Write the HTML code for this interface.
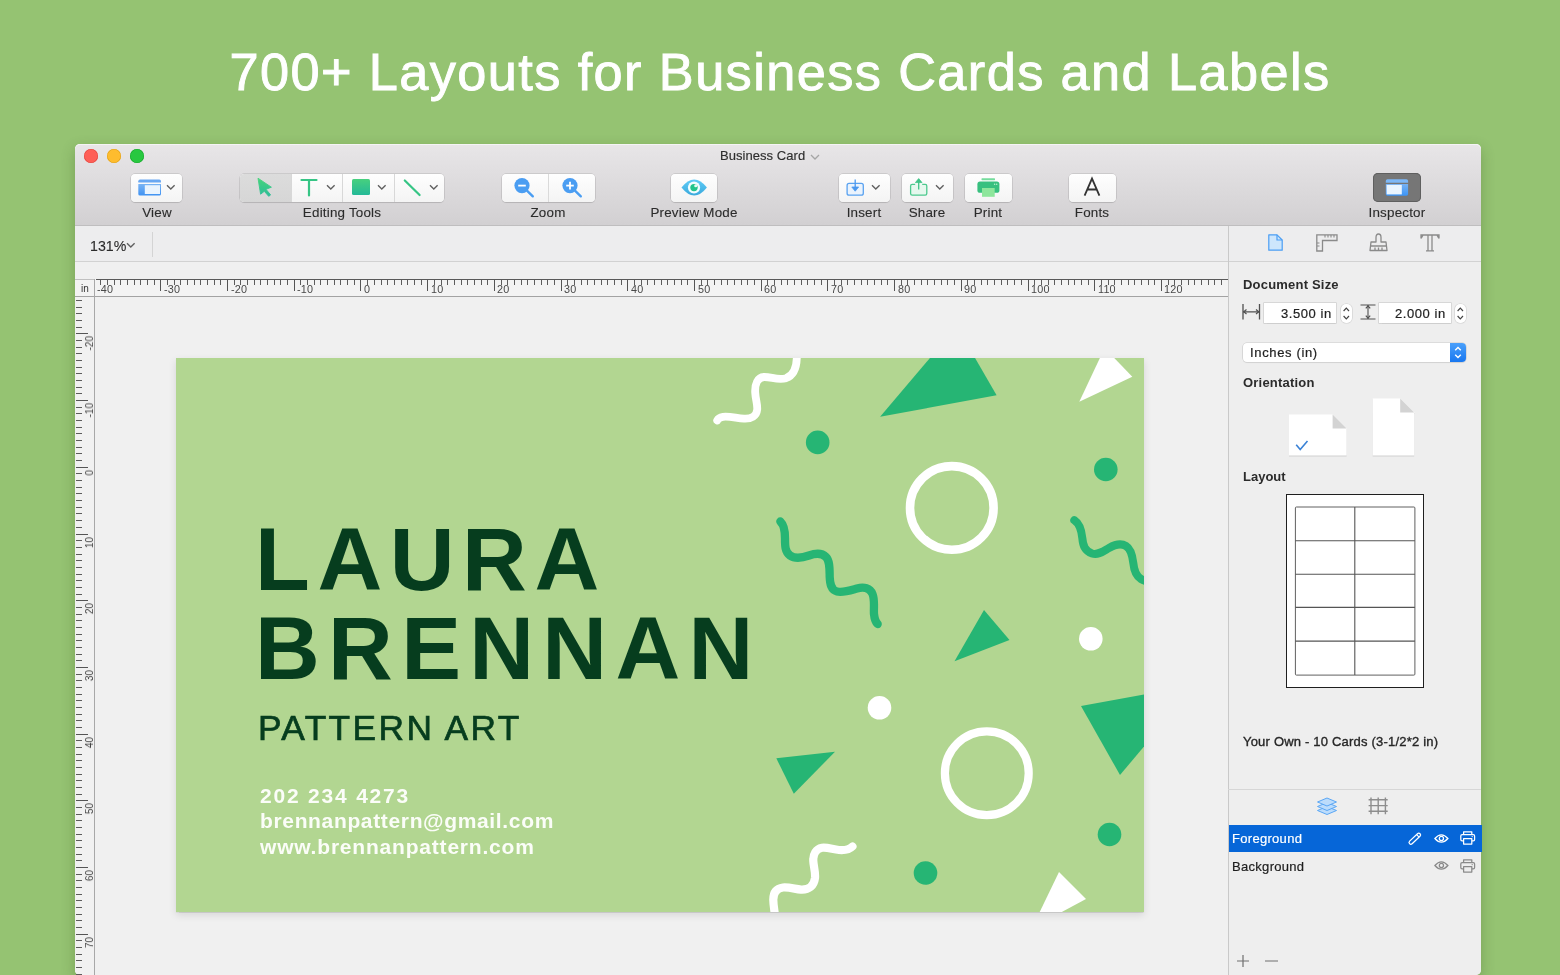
<!DOCTYPE html>
<html><head><meta charset="utf-8"><style>
*{margin:0;padding:0;box-sizing:border-box}
html,body{width:1560px;height:975px;overflow:hidden}
body{background:#95c372;font-family:"Liberation Sans",sans-serif;position:relative;color:#2b2b2b}
.a{position:absolute;white-space:nowrap;will-change:transform}
svg{position:absolute;overflow:visible}
</style></head><body>
<div class="a" style="left:0.0px;width:1560px;text-align:center;top:46.0px;font-size:52.3px;line-height:52.3px;color:#fff;letter-spacing:1.4px;-webkit-text-stroke:.9px #fff">700+ Layouts for Business Cards and Labels</div>
<div class="a" style="left:75px;top:144px;width:1406px;height:831px;border-radius:5px;background:#efefef;box-shadow:0 5px 14px 0 rgba(50,80,30,.3)"></div>
<div class="a" style="left:75px;top:144px;width:1406px;height:82px;border-radius:5px 5px 0 0;background:linear-gradient(#e8e6e8,#d2d0d2);border-bottom:1px solid #bfbebf;box-shadow:inset 0 1px 0 rgba(255,255,255,.55)"></div>
<div class="a" style="left:84.3px;top:149.2px;width:14px;height:14px;border-radius:50%;background:#fe5f57;box-shadow:inset 0 0 0 .6px #e2463f"></div>
<div class="a" style="left:107.1px;top:149.2px;width:14px;height:14px;border-radius:50%;background:#febc2e;box-shadow:inset 0 0 0 .6px #e1a116"></div>
<div class="a" style="left:129.9px;top:149.2px;width:14px;height:14px;border-radius:50%;background:#28c840;box-shadow:inset 0 0 0 .6px #17a82b"></div>
<div class="a" style="left:720.2px;top:149.2px;font-size:13px;line-height:13px;color:#2e2e2e;letter-spacing:.05px;-webkit-text-stroke:.15px #2e2e2e">Business Card</div>
<svg style="left:810px;top:154px" width="10" height="6"><path d="M1 1 L5 5 L9 1" fill="none" stroke="#a5a5a5" stroke-width="1.3"/></svg>
<div class="a" style="left:131px;top:173.5px;width:51px;height:28.0px;border-radius:4px;background:linear-gradient(#fefefe,#f4f4f4);box-shadow:0 0 0 .5px rgba(0,0,0,.18),0 1px 1px rgba(0,0,0,.08)"></div>
<svg style="left:137px;top:178px" width="26" height="20" viewBox="137 178 26 20"><defs><linearGradient id="vg" x1="0" y1="0" x2="0" y2="1"><stop offset="0" stop-color="#7ab4f4"/><stop offset="1" stop-color="#3f92f2"/></linearGradient></defs><path d="M138.3 182.6 V181.3 Q138.3 179.6 140 179.6 H159.3 Q161 179.6 161 181.3 V182.6 Z" fill="#6aa8f2"/><path d="M138.3 184 H161 V193.9 Q161 195.6 159.3 195.6 H140 Q138.3 195.6 138.3 193.9 Z" fill="url(#vg)"/><rect x="144.8" y="185.2" width="15.2" height="8.8" fill="#eaf4fe"/></svg>
<svg style="left:166.2px;top:183.8px" width="10" height="7"><path d="M1 1.2 L4.8 5 L8.6 1.2" fill="none" stroke="#606060" stroke-width="1.35"/></svg>
<div class="a" style="left:56.5px;width:200px;text-align:center;top:206.3px;font-size:13.4px;line-height:13.4px;letter-spacing:.2px;-webkit-text-stroke:.12px #333">View</div>
<div class="a" style="left:239.5px;top:173.5px;width:203.5px;height:28.0px;border-radius:4px;background:linear-gradient(#fefefe,#f4f4f4);box-shadow:0 0 0 .5px rgba(0,0,0,.18),0 1px 1px rgba(0,0,0,.08)"></div>
<div class="a" style="left:239.5px;top:173.5px;width:51px;height:28px;border-radius:4px 0 0 4px;background:linear-gradient(#dcdcdc,#d6d6d6)"></div>
<div class="a" style="left:290.5px;top:173.5px;width:1px;height:28px;background:#d8d8d8"></div>
<div class="a" style="left:341.5px;top:173.5px;width:1px;height:28px;background:#d8d8d8"></div>
<div class="a" style="left:393.5px;top:173.5px;width:1px;height:28px;background:#d8d8d8"></div>
<svg style="left:255px;top:175px" width="20" height="24" viewBox="255 175 20 24"><defs><linearGradient id="ag" x1="0" y1="0" x2="0" y2="1"><stop offset="0" stop-color="#48d47c"/><stop offset="1" stop-color="#2cbc98"/></linearGradient></defs><path d="M258 178.2 L271.4 187.2 L266 189.3 L270.6 194.9 L268.7 196.3 L264.3 191.3 L260.6 194.2 Z" fill="url(#ag)" stroke="url(#ag)" stroke-width=".9" stroke-linejoin="round"/></svg>
<svg style="left:300px;top:178px" width="18" height="19" viewBox="0 0 18 19"><path d="M1.5 2 H16.5 M9 2 V17.5" fill="none" stroke="#36c585" stroke-width="2.2" stroke-linecap="round"/></svg>
<svg style="left:325.5px;top:184px" width="10" height="7"><path d="M1 1.2 L4.8 5 L8.6 1.2" fill="none" stroke="#606060" stroke-width="1.35"/></svg>
<div class="a" style="left:351.6px;top:179.1px;width:18.4px;height:16.2px;border-radius:1.5px;background:linear-gradient(#47d07e,#24b998)"></div>
<svg style="left:377px;top:184px" width="10" height="7"><path d="M1 1.2 L4.8 5 L8.6 1.2" fill="none" stroke="#606060" stroke-width="1.35"/></svg>
<svg style="left:402px;top:178px" width="20" height="20" viewBox="0 0 20 20"><path d="M2.8 2.5 L17.6 17" fill="none" stroke="#36c585" stroke-width="2.2" stroke-linecap="round"/></svg>
<svg style="left:429px;top:184px" width="10" height="7"><path d="M1 1.2 L4.8 5 L8.6 1.2" fill="none" stroke="#606060" stroke-width="1.35"/></svg>
<div class="a" style="left:242.0px;width:200px;text-align:center;top:206.3px;font-size:13.4px;line-height:13.4px;letter-spacing:.2px;-webkit-text-stroke:.12px #333">Editing Tools</div>
<div class="a" style="left:502px;top:173.5px;width:92.5px;height:28.0px;border-radius:4px;background:linear-gradient(#fefefe,#f4f4f4);box-shadow:0 0 0 .5px rgba(0,0,0,.18),0 1px 1px rgba(0,0,0,.08)"></div>
<div class="a" style="left:548px;top:173.5px;width:1px;height:28px;background:#dadada"></div>
<svg style="left:513px;top:177px" width="24" height="24" viewBox="0 0 24 24"><circle cx="9" cy="8.6" r="7.6" fill="#4a9df2"/><path d="M14.2 13.8 L19.8 19.3" stroke="#4a9df2" stroke-width="2.4" stroke-linecap="round"/><path d="M5.2 8.6 H12.8" stroke="#fff" stroke-width="1.8"/></svg>
<svg style="left:561.4px;top:177px" width="24" height="24" viewBox="0 0 24 24"><circle cx="9" cy="8.6" r="7.6" fill="#4a9df2"/><path d="M14.2 13.8 L19.8 19.3" stroke="#4a9df2" stroke-width="2.4" stroke-linecap="round"/><path d="M5.2 8.6 H12.8" stroke="#fff" stroke-width="1.8"/><path d="M9 4.8 V12.4" stroke="#fff" stroke-width="1.8"/></svg>
<div class="a" style="left:448.0px;width:200px;text-align:center;top:206.3px;font-size:13.4px;line-height:13.4px;letter-spacing:.2px;-webkit-text-stroke:.12px #333">Zoom</div>
<div class="a" style="left:671px;top:173.5px;width:46px;height:28.0px;border-radius:4px;background:linear-gradient(#fefefe,#f4f4f4);box-shadow:0 0 0 .5px rgba(0,0,0,.18),0 1px 1px rgba(0,0,0,.08)"></div>
<svg style="left:680px;top:178px" width="28" height="20" viewBox="680 178 28 20"><defs><linearGradient id="eg" x1="0" y1="0" x2="0" y2="1"><stop offset="0" stop-color="#5fcbf7"/><stop offset="1" stop-color="#3aa9dc"/></linearGradient></defs><path d="M681.5 187.6 Q694.2 171.6 706.9 187.6 Q694.2 203.6 681.5 187.6 Z" fill="url(#eg)"/><circle cx="694" cy="187.5" r="6.1" fill="#f2fdff"/><circle cx="694" cy="187.6" r="3.7" fill="#22c48c"/><circle cx="695.7" cy="185.8" r="1.5" fill="#e9fbf3"/></svg>
<div class="a" style="left:594.0px;width:200px;text-align:center;top:206.3px;font-size:13.4px;line-height:13.4px;letter-spacing:.2px;-webkit-text-stroke:.12px #333">Preview Mode</div>
<div class="a" style="left:838.5px;top:173.5px;width:50.5px;height:28.0px;border-radius:4px;background:linear-gradient(#fefefe,#f4f4f4);box-shadow:0 0 0 .5px rgba(0,0,0,.18),0 1px 1px rgba(0,0,0,.08)"></div>
<svg style="left:844px;top:177px" width="22" height="21" viewBox="844 177 22 21"><rect x="847.1" y="183.4" width="16.2" height="11.8" rx="2" fill="#eaf3fd" stroke="#5aa2f0" stroke-width="1.3"/><path d="M855.2 179.5 V189.5" stroke="#4a98ef" stroke-width="1.3"/><path d="M851.8 187 L855.2 191.2 L858.6 187 Z" fill="#4a98ef" stroke="#4a98ef" stroke-width=".8" stroke-linejoin="round"/></svg>
<svg style="left:871px;top:184px" width="10" height="7"><path d="M1 1.2 L4.8 5 L8.6 1.2" fill="none" stroke="#606060" stroke-width="1.35"/></svg>
<div class="a" style="left:763.8px;width:200px;text-align:center;top:206.3px;font-size:13.4px;line-height:13.4px;letter-spacing:.2px;-webkit-text-stroke:.12px #333">Insert</div>
<div class="a" style="left:902px;top:173.5px;width:50.5px;height:28.0px;border-radius:4px;background:linear-gradient(#fefefe,#f4f4f4);box-shadow:0 0 0 .5px rgba(0,0,0,.18),0 1px 1px rgba(0,0,0,.08)"></div>
<svg style="left:907px;top:177px" width="23" height="21" viewBox="907 177 23 21"><path d="M915.2 184.4 H912.2 Q910.6 184.4 910.6 186 V193.6 Q910.6 195.2 912.2 195.2 H925.2 Q926.8 195.2 926.8 193.6 V186 Q926.8 184.4 925.2 184.4 H922.2" fill="#e6f8ee" stroke="#4cc98e" stroke-width="1.3"/><path d="M918.7 181.5 V189.5" stroke="#3fc487" stroke-width="1.3"/><path d="M915.4 182.6 L918.7 178.6 L922 182.6 Z" fill="#3fc487" stroke="#3fc487" stroke-width=".8" stroke-linejoin="round"/></svg>
<svg style="left:935px;top:184px" width="10" height="7"><path d="M1 1.2 L4.8 5 L8.6 1.2" fill="none" stroke="#606060" stroke-width="1.35"/></svg>
<div class="a" style="left:827.0px;width:200px;text-align:center;top:206.3px;font-size:13.4px;line-height:13.4px;letter-spacing:.2px;-webkit-text-stroke:.12px #333">Share</div>
<div class="a" style="left:965px;top:173.5px;width:46.5px;height:28.0px;border-radius:4px;background:linear-gradient(#fefefe,#f4f4f4);box-shadow:0 0 0 .5px rgba(0,0,0,.18),0 1px 1px rgba(0,0,0,.08)"></div>
<svg style="left:976px;top:177px" width="25" height="21" viewBox="976 177 25 21"><rect x="981.5" y="178.2" width="13.5" height="2" rx=".6" fill="#74dc9c"/><rect x="977.4" y="181.6" width="22" height="11.2" rx="2.6" fill="#38c07f"/><rect x="982" y="188" width="12.7" height="8.8" fill="#8ee69c"/><circle cx="994.6" cy="184.3" r=".75" fill="#b9f0cf"/><circle cx="996.7" cy="184.3" r=".75" fill="#b9f0cf"/></svg>
<div class="a" style="left:888.3px;width:200px;text-align:center;top:206.3px;font-size:13.4px;line-height:13.4px;letter-spacing:.2px;-webkit-text-stroke:.12px #333">Print</div>
<div class="a" style="left:1069px;top:173.5px;width:46.5px;height:28.0px;border-radius:4px;background:linear-gradient(#fefefe,#f4f4f4);box-shadow:0 0 0 .5px rgba(0,0,0,.18),0 1px 1px rgba(0,0,0,.08)"></div>
<svg style="left:1083px;top:177px" width="18" height="20" viewBox="0 0 18 20"><path d="M1.6 18.6 L9 1.6 L16.4 18.6 M4.6 12.5 H13.4" fill="none" stroke="#333" stroke-width="1.8"/></svg>
<div class="a" style="left:992.3px;width:200px;text-align:center;top:206.3px;font-size:13.4px;line-height:13.4px;letter-spacing:.2px;-webkit-text-stroke:.12px #333">Fonts</div>
<div class="a" style="left:1373.2px;top:173px;width:47.6px;height:28.8px;border-radius:5px;background:#767676;box-shadow:inset 0 0 0 1px #5f5f5f"></div>
<svg style="left:1384px;top:178px" width="26" height="20" viewBox="1384 178 26 20"><defs><linearGradient id="ig" x1="0" y1="0" x2="0" y2="1"><stop offset="0" stop-color="#78b2f2"/><stop offset="1" stop-color="#3b94f6"/></linearGradient></defs><path d="M1385.8 182.7 V181 Q1385.8 179.3 1387.5 179.3 H1406.4 Q1408.1 179.3 1408.1 181 V182.7 Z" fill="#7db8f7"/><path d="M1385.8 184 H1408.1 V194 Q1408.1 195.8 1406.4 195.8 H1387.5 Q1385.8 195.8 1385.8 194 Z" fill="url(#ig)"/><rect x="1386.6" y="184.9" width="15.2" height="9.5" fill="#eaf5ff"/></svg>
<div class="a" style="left:1297.0px;width:200px;text-align:center;top:206.3px;font-size:13.4px;line-height:13.4px;letter-spacing:.2px;-webkit-text-stroke:.12px #333">Inspector</div>
<div class="a" style="left:75px;top:226px;width:1153px;height:36px;background:#ededee;border-bottom:1px solid #d2d2d2"></div>
<div class="a" style="left:1228px;top:226px;width:253px;height:36px;background:#ededee;border-bottom:1px solid #d2d2d2"></div>
<div class="a" style="left:90.0px;top:238.8px;font-size:14.2px;line-height:14.2px;color:#2b2b2b;-webkit-text-stroke:.1px #2b2b2b">131%</div>
<svg style="left:126px;top:242px" width="10" height="7"><path d="M1 1.2 L4.8 5 L8.6 1.2" fill="none" stroke="#606060" stroke-width="1.35"/></svg>
<div class="a" style="left:152px;top:232px;width:1px;height:25px;background:#d4d4d4"></div>
<div class="a" style="left:75px;top:262px;width:1153px;height:713px;background:#f0f0f0;border-radius:0 0 0 5px"></div>
<div class="a" style="left:75px;top:297px;width:19px;height:678px;background:#f1f1f1;border-radius:0 0 0 5px"></div>
<div class="a" style="left:1228px;top:262px;width:253px;height:713px;background:#eeeeee;border-radius:0 0 5px 0"></div>
<div class="a" style="left:1227.5px;top:226px;width:1px;height:749px;background:#c9c9c9"></div>
<div class="a" style="left:75px;top:279px;width:1153px;height:18px;background:#f3f3f3"></div>
<div class="a" style="left:96px;top:279px;width:1132px;height:1.3px;background:#5a5a5a"></div>
<div class="a" style="left:75px;top:296.2px;width:1153px;height:1.2px;background:#a3a3a3"></div>
<div class="a" style="left:75px;top:279px;width:20px;height:1px;background:#c0c0c0"></div>
<div class="a" style="left:93.6px;top:279px;width:1.2px;height:696px;background:#a8a8a8"></div>
<div class="a" style="left:81.0px;top:283.5px;font-size:10px;line-height:10px;color:#333">in</div>
<div class="a" style="left:100px;top:280px;width:1.4px;height:4.8px;background:#5c5c5c"></div><div class="a" style="left:107px;top:280px;width:1.4px;height:4.8px;background:#5c5c5c"></div><div class="a" style="left:114px;top:280px;width:1.4px;height:4.8px;background:#5c5c5c"></div><div class="a" style="left:120px;top:280px;width:1.4px;height:4.8px;background:#5c5c5c"></div><div class="a" style="left:127px;top:280px;width:1.4px;height:4.8px;background:#5c5c5c"></div><div class="a" style="left:134px;top:280px;width:1.4px;height:4.8px;background:#5c5c5c"></div><div class="a" style="left:140px;top:280px;width:1.4px;height:4.8px;background:#5c5c5c"></div><div class="a" style="left:147px;top:280px;width:1.4px;height:4.8px;background:#5c5c5c"></div><div class="a" style="left:154px;top:280px;width:1.4px;height:4.8px;background:#5c5c5c"></div><div class="a" style="left:160px;top:280px;width:1.3px;height:10.6px;background:#555"></div><div class="a" style="left:167px;top:280px;width:1.4px;height:4.8px;background:#5c5c5c"></div><div class="a" style="left:174px;top:280px;width:1.4px;height:4.8px;background:#5c5c5c"></div><div class="a" style="left:180px;top:280px;width:1.4px;height:4.8px;background:#5c5c5c"></div><div class="a" style="left:187px;top:280px;width:1.4px;height:4.8px;background:#5c5c5c"></div><div class="a" style="left:194px;top:280px;width:1.4px;height:4.8px;background:#5c5c5c"></div><div class="a" style="left:200px;top:280px;width:1.4px;height:4.8px;background:#5c5c5c"></div><div class="a" style="left:207px;top:280px;width:1.4px;height:4.8px;background:#5c5c5c"></div><div class="a" style="left:214px;top:280px;width:1.4px;height:4.8px;background:#5c5c5c"></div><div class="a" style="left:220px;top:280px;width:1.4px;height:4.8px;background:#5c5c5c"></div><div class="a" style="left:227px;top:280px;width:1.3px;height:10.6px;background:#555"></div><div class="a" style="left:234px;top:280px;width:1.4px;height:4.8px;background:#5c5c5c"></div><div class="a" style="left:240px;top:280px;width:1.4px;height:4.8px;background:#5c5c5c"></div><div class="a" style="left:247px;top:280px;width:1.4px;height:4.8px;background:#5c5c5c"></div><div class="a" style="left:254px;top:280px;width:1.4px;height:4.8px;background:#5c5c5c"></div><div class="a" style="left:260px;top:280px;width:1.4px;height:4.8px;background:#5c5c5c"></div><div class="a" style="left:267px;top:280px;width:1.4px;height:4.8px;background:#5c5c5c"></div><div class="a" style="left:274px;top:280px;width:1.4px;height:4.8px;background:#5c5c5c"></div><div class="a" style="left:280px;top:280px;width:1.4px;height:4.8px;background:#5c5c5c"></div><div class="a" style="left:287px;top:280px;width:1.4px;height:4.8px;background:#5c5c5c"></div><div class="a" style="left:294px;top:280px;width:1.3px;height:10.6px;background:#555"></div><div class="a" style="left:300px;top:280px;width:1.4px;height:4.8px;background:#5c5c5c"></div><div class="a" style="left:307px;top:280px;width:1.4px;height:4.8px;background:#5c5c5c"></div><div class="a" style="left:314px;top:280px;width:1.4px;height:4.8px;background:#5c5c5c"></div><div class="a" style="left:320px;top:280px;width:1.4px;height:4.8px;background:#5c5c5c"></div><div class="a" style="left:327px;top:280px;width:1.4px;height:4.8px;background:#5c5c5c"></div><div class="a" style="left:334px;top:280px;width:1.4px;height:4.8px;background:#5c5c5c"></div><div class="a" style="left:340px;top:280px;width:1.4px;height:4.8px;background:#5c5c5c"></div><div class="a" style="left:347px;top:280px;width:1.4px;height:4.8px;background:#5c5c5c"></div><div class="a" style="left:354px;top:280px;width:1.4px;height:4.8px;background:#5c5c5c"></div><div class="a" style="left:360px;top:280px;width:1.3px;height:10.6px;background:#555"></div><div class="a" style="left:367px;top:280px;width:1.4px;height:4.8px;background:#5c5c5c"></div><div class="a" style="left:374px;top:280px;width:1.4px;height:4.8px;background:#5c5c5c"></div><div class="a" style="left:381px;top:280px;width:1.4px;height:4.8px;background:#5c5c5c"></div><div class="a" style="left:387px;top:280px;width:1.4px;height:4.8px;background:#5c5c5c"></div><div class="a" style="left:394px;top:280px;width:1.4px;height:4.8px;background:#5c5c5c"></div><div class="a" style="left:401px;top:280px;width:1.4px;height:4.8px;background:#5c5c5c"></div><div class="a" style="left:407px;top:280px;width:1.4px;height:4.8px;background:#5c5c5c"></div><div class="a" style="left:414px;top:280px;width:1.4px;height:4.8px;background:#5c5c5c"></div><div class="a" style="left:421px;top:280px;width:1.4px;height:4.8px;background:#5c5c5c"></div><div class="a" style="left:427px;top:280px;width:1.3px;height:10.6px;background:#555"></div><div class="a" style="left:434px;top:280px;width:1.4px;height:4.8px;background:#5c5c5c"></div><div class="a" style="left:441px;top:280px;width:1.4px;height:4.8px;background:#5c5c5c"></div><div class="a" style="left:447px;top:280px;width:1.4px;height:4.8px;background:#5c5c5c"></div><div class="a" style="left:454px;top:280px;width:1.4px;height:4.8px;background:#5c5c5c"></div><div class="a" style="left:461px;top:280px;width:1.4px;height:4.8px;background:#5c5c5c"></div><div class="a" style="left:467px;top:280px;width:1.4px;height:4.8px;background:#5c5c5c"></div><div class="a" style="left:474px;top:280px;width:1.4px;height:4.8px;background:#5c5c5c"></div><div class="a" style="left:481px;top:280px;width:1.4px;height:4.8px;background:#5c5c5c"></div><div class="a" style="left:487px;top:280px;width:1.4px;height:4.8px;background:#5c5c5c"></div><div class="a" style="left:494px;top:280px;width:1.3px;height:10.6px;background:#555"></div><div class="a" style="left:501px;top:280px;width:1.4px;height:4.8px;background:#5c5c5c"></div><div class="a" style="left:507px;top:280px;width:1.4px;height:4.8px;background:#5c5c5c"></div><div class="a" style="left:514px;top:280px;width:1.4px;height:4.8px;background:#5c5c5c"></div><div class="a" style="left:521px;top:280px;width:1.4px;height:4.8px;background:#5c5c5c"></div><div class="a" style="left:527px;top:280px;width:1.4px;height:4.8px;background:#5c5c5c"></div><div class="a" style="left:534px;top:280px;width:1.4px;height:4.8px;background:#5c5c5c"></div><div class="a" style="left:541px;top:280px;width:1.4px;height:4.8px;background:#5c5c5c"></div><div class="a" style="left:547px;top:280px;width:1.4px;height:4.8px;background:#5c5c5c"></div><div class="a" style="left:554px;top:280px;width:1.4px;height:4.8px;background:#5c5c5c"></div><div class="a" style="left:561px;top:280px;width:1.3px;height:10.6px;background:#555"></div><div class="a" style="left:567px;top:280px;width:1.4px;height:4.8px;background:#5c5c5c"></div><div class="a" style="left:574px;top:280px;width:1.4px;height:4.8px;background:#5c5c5c"></div><div class="a" style="left:581px;top:280px;width:1.4px;height:4.8px;background:#5c5c5c"></div><div class="a" style="left:587px;top:280px;width:1.4px;height:4.8px;background:#5c5c5c"></div><div class="a" style="left:594px;top:280px;width:1.4px;height:4.8px;background:#5c5c5c"></div><div class="a" style="left:601px;top:280px;width:1.4px;height:4.8px;background:#5c5c5c"></div><div class="a" style="left:607px;top:280px;width:1.4px;height:4.8px;background:#5c5c5c"></div><div class="a" style="left:614px;top:280px;width:1.4px;height:4.8px;background:#5c5c5c"></div><div class="a" style="left:621px;top:280px;width:1.4px;height:4.8px;background:#5c5c5c"></div><div class="a" style="left:627px;top:280px;width:1.3px;height:10.6px;background:#555"></div><div class="a" style="left:634px;top:280px;width:1.4px;height:4.8px;background:#5c5c5c"></div><div class="a" style="left:641px;top:280px;width:1.4px;height:4.8px;background:#5c5c5c"></div><div class="a" style="left:647px;top:280px;width:1.4px;height:4.8px;background:#5c5c5c"></div><div class="a" style="left:654px;top:280px;width:1.4px;height:4.8px;background:#5c5c5c"></div><div class="a" style="left:661px;top:280px;width:1.4px;height:4.8px;background:#5c5c5c"></div><div class="a" style="left:667px;top:280px;width:1.4px;height:4.8px;background:#5c5c5c"></div><div class="a" style="left:674px;top:280px;width:1.4px;height:4.8px;background:#5c5c5c"></div><div class="a" style="left:681px;top:280px;width:1.4px;height:4.8px;background:#5c5c5c"></div><div class="a" style="left:687px;top:280px;width:1.4px;height:4.8px;background:#5c5c5c"></div><div class="a" style="left:694px;top:280px;width:1.3px;height:10.6px;background:#555"></div><div class="a" style="left:701px;top:280px;width:1.4px;height:4.8px;background:#5c5c5c"></div><div class="a" style="left:707px;top:280px;width:1.4px;height:4.8px;background:#5c5c5c"></div><div class="a" style="left:714px;top:280px;width:1.4px;height:4.8px;background:#5c5c5c"></div><div class="a" style="left:721px;top:280px;width:1.4px;height:4.8px;background:#5c5c5c"></div><div class="a" style="left:727px;top:280px;width:1.4px;height:4.8px;background:#5c5c5c"></div><div class="a" style="left:734px;top:280px;width:1.4px;height:4.8px;background:#5c5c5c"></div><div class="a" style="left:741px;top:280px;width:1.4px;height:4.8px;background:#5c5c5c"></div><div class="a" style="left:747px;top:280px;width:1.4px;height:4.8px;background:#5c5c5c"></div><div class="a" style="left:754px;top:280px;width:1.4px;height:4.8px;background:#5c5c5c"></div><div class="a" style="left:761px;top:280px;width:1.3px;height:10.6px;background:#555"></div><div class="a" style="left:767px;top:280px;width:1.4px;height:4.8px;background:#5c5c5c"></div><div class="a" style="left:774px;top:280px;width:1.4px;height:4.8px;background:#5c5c5c"></div><div class="a" style="left:781px;top:280px;width:1.4px;height:4.8px;background:#5c5c5c"></div><div class="a" style="left:787px;top:280px;width:1.4px;height:4.8px;background:#5c5c5c"></div><div class="a" style="left:794px;top:280px;width:1.4px;height:4.8px;background:#5c5c5c"></div><div class="a" style="left:801px;top:280px;width:1.4px;height:4.8px;background:#5c5c5c"></div><div class="a" style="left:807px;top:280px;width:1.4px;height:4.8px;background:#5c5c5c"></div><div class="a" style="left:814px;top:280px;width:1.4px;height:4.8px;background:#5c5c5c"></div><div class="a" style="left:821px;top:280px;width:1.4px;height:4.8px;background:#5c5c5c"></div><div class="a" style="left:827px;top:280px;width:1.3px;height:10.6px;background:#555"></div><div class="a" style="left:834px;top:280px;width:1.4px;height:4.8px;background:#5c5c5c"></div><div class="a" style="left:841px;top:280px;width:1.4px;height:4.8px;background:#5c5c5c"></div><div class="a" style="left:847px;top:280px;width:1.4px;height:4.8px;background:#5c5c5c"></div><div class="a" style="left:854px;top:280px;width:1.4px;height:4.8px;background:#5c5c5c"></div><div class="a" style="left:861px;top:280px;width:1.4px;height:4.8px;background:#5c5c5c"></div><div class="a" style="left:867px;top:280px;width:1.4px;height:4.8px;background:#5c5c5c"></div><div class="a" style="left:874px;top:280px;width:1.4px;height:4.8px;background:#5c5c5c"></div><div class="a" style="left:881px;top:280px;width:1.4px;height:4.8px;background:#5c5c5c"></div><div class="a" style="left:887px;top:280px;width:1.4px;height:4.8px;background:#5c5c5c"></div><div class="a" style="left:894px;top:280px;width:1.3px;height:10.6px;background:#555"></div><div class="a" style="left:901px;top:280px;width:1.4px;height:4.8px;background:#5c5c5c"></div><div class="a" style="left:907px;top:280px;width:1.4px;height:4.8px;background:#5c5c5c"></div><div class="a" style="left:914px;top:280px;width:1.4px;height:4.8px;background:#5c5c5c"></div><div class="a" style="left:921px;top:280px;width:1.4px;height:4.8px;background:#5c5c5c"></div><div class="a" style="left:927px;top:280px;width:1.4px;height:4.8px;background:#5c5c5c"></div><div class="a" style="left:934px;top:280px;width:1.4px;height:4.8px;background:#5c5c5c"></div><div class="a" style="left:941px;top:280px;width:1.4px;height:4.8px;background:#5c5c5c"></div><div class="a" style="left:947px;top:280px;width:1.4px;height:4.8px;background:#5c5c5c"></div><div class="a" style="left:954px;top:280px;width:1.4px;height:4.8px;background:#5c5c5c"></div><div class="a" style="left:961px;top:280px;width:1.3px;height:10.6px;background:#555"></div><div class="a" style="left:967px;top:280px;width:1.4px;height:4.8px;background:#5c5c5c"></div><div class="a" style="left:974px;top:280px;width:1.4px;height:4.8px;background:#5c5c5c"></div><div class="a" style="left:981px;top:280px;width:1.4px;height:4.8px;background:#5c5c5c"></div><div class="a" style="left:987px;top:280px;width:1.4px;height:4.8px;background:#5c5c5c"></div><div class="a" style="left:994px;top:280px;width:1.4px;height:4.8px;background:#5c5c5c"></div><div class="a" style="left:1001px;top:280px;width:1.4px;height:4.8px;background:#5c5c5c"></div><div class="a" style="left:1007px;top:280px;width:1.4px;height:4.8px;background:#5c5c5c"></div><div class="a" style="left:1014px;top:280px;width:1.4px;height:4.8px;background:#5c5c5c"></div><div class="a" style="left:1021px;top:280px;width:1.4px;height:4.8px;background:#5c5c5c"></div><div class="a" style="left:1028px;top:280px;width:1.3px;height:10.6px;background:#555"></div><div class="a" style="left:1034px;top:280px;width:1.4px;height:4.8px;background:#5c5c5c"></div><div class="a" style="left:1041px;top:280px;width:1.4px;height:4.8px;background:#5c5c5c"></div><div class="a" style="left:1048px;top:280px;width:1.4px;height:4.8px;background:#5c5c5c"></div><div class="a" style="left:1054px;top:280px;width:1.4px;height:4.8px;background:#5c5c5c"></div><div class="a" style="left:1061px;top:280px;width:1.4px;height:4.8px;background:#5c5c5c"></div><div class="a" style="left:1068px;top:280px;width:1.4px;height:4.8px;background:#5c5c5c"></div><div class="a" style="left:1074px;top:280px;width:1.4px;height:4.8px;background:#5c5c5c"></div><div class="a" style="left:1081px;top:280px;width:1.4px;height:4.8px;background:#5c5c5c"></div><div class="a" style="left:1088px;top:280px;width:1.4px;height:4.8px;background:#5c5c5c"></div><div class="a" style="left:1094px;top:280px;width:1.3px;height:10.6px;background:#555"></div><div class="a" style="left:1101px;top:280px;width:1.4px;height:4.8px;background:#5c5c5c"></div><div class="a" style="left:1108px;top:280px;width:1.4px;height:4.8px;background:#5c5c5c"></div><div class="a" style="left:1114px;top:280px;width:1.4px;height:4.8px;background:#5c5c5c"></div><div class="a" style="left:1121px;top:280px;width:1.4px;height:4.8px;background:#5c5c5c"></div><div class="a" style="left:1128px;top:280px;width:1.4px;height:4.8px;background:#5c5c5c"></div><div class="a" style="left:1134px;top:280px;width:1.4px;height:4.8px;background:#5c5c5c"></div><div class="a" style="left:1141px;top:280px;width:1.4px;height:4.8px;background:#5c5c5c"></div><div class="a" style="left:1148px;top:280px;width:1.4px;height:4.8px;background:#5c5c5c"></div><div class="a" style="left:1154px;top:280px;width:1.4px;height:4.8px;background:#5c5c5c"></div><div class="a" style="left:1161px;top:280px;width:1.3px;height:10.6px;background:#555"></div><div class="a" style="left:1168px;top:280px;width:1.4px;height:4.8px;background:#5c5c5c"></div><div class="a" style="left:1174px;top:280px;width:1.4px;height:4.8px;background:#5c5c5c"></div><div class="a" style="left:1181px;top:280px;width:1.4px;height:4.8px;background:#5c5c5c"></div><div class="a" style="left:1188px;top:280px;width:1.4px;height:4.8px;background:#5c5c5c"></div><div class="a" style="left:1194px;top:280px;width:1.4px;height:4.8px;background:#5c5c5c"></div><div class="a" style="left:1201px;top:280px;width:1.4px;height:4.8px;background:#5c5c5c"></div><div class="a" style="left:1208px;top:280px;width:1.4px;height:4.8px;background:#5c5c5c"></div><div class="a" style="left:1214px;top:280px;width:1.4px;height:4.8px;background:#5c5c5c"></div><div class="a" style="left:1221px;top:280px;width:1.4px;height:4.8px;background:#5c5c5c"></div>
<div class="a" style="left:97.2px;top:283.9px;font-size:10.8px;line-height:10.8px;color:#484848;letter-spacing:.2px">-40</div>
<div class="a" style="left:163.9px;top:283.9px;font-size:10.8px;line-height:10.8px;color:#484848;letter-spacing:.2px">-30</div>
<div class="a" style="left:230.6px;top:283.9px;font-size:10.8px;line-height:10.8px;color:#484848;letter-spacing:.2px">-20</div>
<div class="a" style="left:297.3px;top:283.9px;font-size:10.8px;line-height:10.8px;color:#484848;letter-spacing:.2px">-10</div>
<div class="a" style="left:364.0px;top:283.9px;font-size:10.8px;line-height:10.8px;color:#484848;letter-spacing:.2px">0</div>
<div class="a" style="left:430.7px;top:283.9px;font-size:10.8px;line-height:10.8px;color:#484848;letter-spacing:.2px">10</div>
<div class="a" style="left:497.4px;top:283.9px;font-size:10.8px;line-height:10.8px;color:#484848;letter-spacing:.2px">20</div>
<div class="a" style="left:564.1px;top:283.9px;font-size:10.8px;line-height:10.8px;color:#484848;letter-spacing:.2px">30</div>
<div class="a" style="left:630.8px;top:283.9px;font-size:10.8px;line-height:10.8px;color:#484848;letter-spacing:.2px">40</div>
<div class="a" style="left:697.5px;top:283.9px;font-size:10.8px;line-height:10.8px;color:#484848;letter-spacing:.2px">50</div>
<div class="a" style="left:764.2px;top:283.9px;font-size:10.8px;line-height:10.8px;color:#484848;letter-spacing:.2px">60</div>
<div class="a" style="left:830.9px;top:283.9px;font-size:10.8px;line-height:10.8px;color:#484848;letter-spacing:.2px">70</div>
<div class="a" style="left:897.6px;top:283.9px;font-size:10.8px;line-height:10.8px;color:#484848;letter-spacing:.2px">80</div>
<div class="a" style="left:964.3px;top:283.9px;font-size:10.8px;line-height:10.8px;color:#484848;letter-spacing:.2px">90</div>
<div class="a" style="left:1031.0px;top:283.9px;font-size:10.8px;line-height:10.8px;color:#484848;letter-spacing:.2px">100</div>
<div class="a" style="left:1097.7px;top:283.9px;font-size:10.8px;line-height:10.8px;color:#484848;letter-spacing:.2px">110</div>
<div class="a" style="left:1164.4px;top:283.9px;font-size:10.8px;line-height:10.8px;color:#484848;letter-spacing:.2px">120</div>
<div class="a" style="left:76px;top:300px;width:6px;height:1.4px;background:#5c5c5c"></div><div class="a" style="left:76px;top:307px;width:6px;height:1.4px;background:#5c5c5c"></div><div class="a" style="left:76px;top:313px;width:6px;height:1.4px;background:#5c5c5c"></div><div class="a" style="left:76px;top:320px;width:6px;height:1.4px;background:#5c5c5c"></div><div class="a" style="left:76px;top:327px;width:6px;height:1.4px;background:#5c5c5c"></div><div class="a" style="left:76px;top:333px;width:12px;height:1.3px;background:#555"></div><div class="a" style="left:76px;top:340px;width:6px;height:1.4px;background:#5c5c5c"></div><div class="a" style="left:76px;top:347px;width:6px;height:1.4px;background:#5c5c5c"></div><div class="a" style="left:76px;top:353px;width:6px;height:1.4px;background:#5c5c5c"></div><div class="a" style="left:76px;top:360px;width:6px;height:1.4px;background:#5c5c5c"></div><div class="a" style="left:76px;top:367px;width:6px;height:1.4px;background:#5c5c5c"></div><div class="a" style="left:76px;top:373px;width:6px;height:1.4px;background:#5c5c5c"></div><div class="a" style="left:76px;top:380px;width:6px;height:1.4px;background:#5c5c5c"></div><div class="a" style="left:76px;top:387px;width:6px;height:1.4px;background:#5c5c5c"></div><div class="a" style="left:76px;top:393px;width:6px;height:1.4px;background:#5c5c5c"></div><div class="a" style="left:76px;top:400px;width:12px;height:1.3px;background:#555"></div><div class="a" style="left:76px;top:407px;width:6px;height:1.4px;background:#5c5c5c"></div><div class="a" style="left:76px;top:413px;width:6px;height:1.4px;background:#5c5c5c"></div><div class="a" style="left:76px;top:420px;width:6px;height:1.4px;background:#5c5c5c"></div><div class="a" style="left:76px;top:427px;width:6px;height:1.4px;background:#5c5c5c"></div><div class="a" style="left:76px;top:433px;width:6px;height:1.4px;background:#5c5c5c"></div><div class="a" style="left:76px;top:440px;width:6px;height:1.4px;background:#5c5c5c"></div><div class="a" style="left:76px;top:447px;width:6px;height:1.4px;background:#5c5c5c"></div><div class="a" style="left:76px;top:453px;width:6px;height:1.4px;background:#5c5c5c"></div><div class="a" style="left:76px;top:460px;width:6px;height:1.4px;background:#5c5c5c"></div><div class="a" style="left:76px;top:467px;width:12px;height:1.3px;background:#555"></div><div class="a" style="left:76px;top:473px;width:6px;height:1.4px;background:#5c5c5c"></div><div class="a" style="left:76px;top:480px;width:6px;height:1.4px;background:#5c5c5c"></div><div class="a" style="left:76px;top:487px;width:6px;height:1.4px;background:#5c5c5c"></div><div class="a" style="left:76px;top:493px;width:6px;height:1.4px;background:#5c5c5c"></div><div class="a" style="left:76px;top:500px;width:6px;height:1.4px;background:#5c5c5c"></div><div class="a" style="left:76px;top:507px;width:6px;height:1.4px;background:#5c5c5c"></div><div class="a" style="left:76px;top:513px;width:6px;height:1.4px;background:#5c5c5c"></div><div class="a" style="left:76px;top:520px;width:6px;height:1.4px;background:#5c5c5c"></div><div class="a" style="left:76px;top:527px;width:6px;height:1.4px;background:#5c5c5c"></div><div class="a" style="left:76px;top:534px;width:12px;height:1.3px;background:#555"></div><div class="a" style="left:76px;top:540px;width:6px;height:1.4px;background:#5c5c5c"></div><div class="a" style="left:76px;top:547px;width:6px;height:1.4px;background:#5c5c5c"></div><div class="a" style="left:76px;top:554px;width:6px;height:1.4px;background:#5c5c5c"></div><div class="a" style="left:76px;top:560px;width:6px;height:1.4px;background:#5c5c5c"></div><div class="a" style="left:76px;top:567px;width:6px;height:1.4px;background:#5c5c5c"></div><div class="a" style="left:76px;top:574px;width:6px;height:1.4px;background:#5c5c5c"></div><div class="a" style="left:76px;top:580px;width:6px;height:1.4px;background:#5c5c5c"></div><div class="a" style="left:76px;top:587px;width:6px;height:1.4px;background:#5c5c5c"></div><div class="a" style="left:76px;top:594px;width:6px;height:1.4px;background:#5c5c5c"></div><div class="a" style="left:76px;top:600px;width:12px;height:1.3px;background:#555"></div><div class="a" style="left:76px;top:607px;width:6px;height:1.4px;background:#5c5c5c"></div><div class="a" style="left:76px;top:614px;width:6px;height:1.4px;background:#5c5c5c"></div><div class="a" style="left:76px;top:620px;width:6px;height:1.4px;background:#5c5c5c"></div><div class="a" style="left:76px;top:627px;width:6px;height:1.4px;background:#5c5c5c"></div><div class="a" style="left:76px;top:634px;width:6px;height:1.4px;background:#5c5c5c"></div><div class="a" style="left:76px;top:640px;width:6px;height:1.4px;background:#5c5c5c"></div><div class="a" style="left:76px;top:647px;width:6px;height:1.4px;background:#5c5c5c"></div><div class="a" style="left:76px;top:654px;width:6px;height:1.4px;background:#5c5c5c"></div><div class="a" style="left:76px;top:660px;width:6px;height:1.4px;background:#5c5c5c"></div><div class="a" style="left:76px;top:667px;width:12px;height:1.3px;background:#555"></div><div class="a" style="left:76px;top:674px;width:6px;height:1.4px;background:#5c5c5c"></div><div class="a" style="left:76px;top:680px;width:6px;height:1.4px;background:#5c5c5c"></div><div class="a" style="left:76px;top:687px;width:6px;height:1.4px;background:#5c5c5c"></div><div class="a" style="left:76px;top:694px;width:6px;height:1.4px;background:#5c5c5c"></div><div class="a" style="left:76px;top:700px;width:6px;height:1.4px;background:#5c5c5c"></div><div class="a" style="left:76px;top:707px;width:6px;height:1.4px;background:#5c5c5c"></div><div class="a" style="left:76px;top:714px;width:6px;height:1.4px;background:#5c5c5c"></div><div class="a" style="left:76px;top:720px;width:6px;height:1.4px;background:#5c5c5c"></div><div class="a" style="left:76px;top:727px;width:6px;height:1.4px;background:#5c5c5c"></div><div class="a" style="left:76px;top:734px;width:12px;height:1.3px;background:#555"></div><div class="a" style="left:76px;top:740px;width:6px;height:1.4px;background:#5c5c5c"></div><div class="a" style="left:76px;top:747px;width:6px;height:1.4px;background:#5c5c5c"></div><div class="a" style="left:76px;top:754px;width:6px;height:1.4px;background:#5c5c5c"></div><div class="a" style="left:76px;top:760px;width:6px;height:1.4px;background:#5c5c5c"></div><div class="a" style="left:76px;top:767px;width:6px;height:1.4px;background:#5c5c5c"></div><div class="a" style="left:76px;top:774px;width:6px;height:1.4px;background:#5c5c5c"></div><div class="a" style="left:76px;top:780px;width:6px;height:1.4px;background:#5c5c5c"></div><div class="a" style="left:76px;top:787px;width:6px;height:1.4px;background:#5c5c5c"></div><div class="a" style="left:76px;top:794px;width:6px;height:1.4px;background:#5c5c5c"></div><div class="a" style="left:76px;top:800px;width:12px;height:1.3px;background:#555"></div><div class="a" style="left:76px;top:807px;width:6px;height:1.4px;background:#5c5c5c"></div><div class="a" style="left:76px;top:814px;width:6px;height:1.4px;background:#5c5c5c"></div><div class="a" style="left:76px;top:820px;width:6px;height:1.4px;background:#5c5c5c"></div><div class="a" style="left:76px;top:827px;width:6px;height:1.4px;background:#5c5c5c"></div><div class="a" style="left:76px;top:834px;width:6px;height:1.4px;background:#5c5c5c"></div><div class="a" style="left:76px;top:840px;width:6px;height:1.4px;background:#5c5c5c"></div><div class="a" style="left:76px;top:847px;width:6px;height:1.4px;background:#5c5c5c"></div><div class="a" style="left:76px;top:854px;width:6px;height:1.4px;background:#5c5c5c"></div><div class="a" style="left:76px;top:860px;width:6px;height:1.4px;background:#5c5c5c"></div><div class="a" style="left:76px;top:867px;width:12px;height:1.3px;background:#555"></div><div class="a" style="left:76px;top:874px;width:6px;height:1.4px;background:#5c5c5c"></div><div class="a" style="left:76px;top:880px;width:6px;height:1.4px;background:#5c5c5c"></div><div class="a" style="left:76px;top:887px;width:6px;height:1.4px;background:#5c5c5c"></div><div class="a" style="left:76px;top:894px;width:6px;height:1.4px;background:#5c5c5c"></div><div class="a" style="left:76px;top:900px;width:6px;height:1.4px;background:#5c5c5c"></div><div class="a" style="left:76px;top:907px;width:6px;height:1.4px;background:#5c5c5c"></div><div class="a" style="left:76px;top:914px;width:6px;height:1.4px;background:#5c5c5c"></div><div class="a" style="left:76px;top:920px;width:6px;height:1.4px;background:#5c5c5c"></div><div class="a" style="left:76px;top:927px;width:6px;height:1.4px;background:#5c5c5c"></div><div class="a" style="left:76px;top:934px;width:12px;height:1.3px;background:#555"></div><div class="a" style="left:76px;top:940px;width:6px;height:1.4px;background:#5c5c5c"></div><div class="a" style="left:76px;top:947px;width:6px;height:1.4px;background:#5c5c5c"></div><div class="a" style="left:76px;top:954px;width:6px;height:1.4px;background:#5c5c5c"></div><div class="a" style="left:76px;top:960px;width:6px;height:1.4px;background:#5c5c5c"></div><div class="a" style="left:76px;top:967px;width:6px;height:1.4px;background:#5c5c5c"></div><div class="a" style="left:76px;top:974px;width:6px;height:1.4px;background:#5c5c5c"></div>
<div class="a" style="left:85.5px;top:336.4px;width:0;height:0"><div style="position:absolute;left:0;top:0;transform-origin:0 0;transform:rotate(-90deg) translate(-100%,0);font-size:10px;line-height:7px;color:#444">-20</div></div>
<div class="a" style="left:85.5px;top:403.1px;width:0;height:0"><div style="position:absolute;left:0;top:0;transform-origin:0 0;transform:rotate(-90deg) translate(-100%,0);font-size:10px;line-height:7px;color:#444">-10</div></div>
<div class="a" style="left:85.5px;top:469.8px;width:0;height:0"><div style="position:absolute;left:0;top:0;transform-origin:0 0;transform:rotate(-90deg) translate(-100%,0);font-size:10px;line-height:7px;color:#444">0</div></div>
<div class="a" style="left:85.5px;top:536.5px;width:0;height:0"><div style="position:absolute;left:0;top:0;transform-origin:0 0;transform:rotate(-90deg) translate(-100%,0);font-size:10px;line-height:7px;color:#444">10</div></div>
<div class="a" style="left:85.5px;top:603.2px;width:0;height:0"><div style="position:absolute;left:0;top:0;transform-origin:0 0;transform:rotate(-90deg) translate(-100%,0);font-size:10px;line-height:7px;color:#444">20</div></div>
<div class="a" style="left:85.5px;top:669.9px;width:0;height:0"><div style="position:absolute;left:0;top:0;transform-origin:0 0;transform:rotate(-90deg) translate(-100%,0);font-size:10px;line-height:7px;color:#444">30</div></div>
<div class="a" style="left:85.5px;top:736.6px;width:0;height:0"><div style="position:absolute;left:0;top:0;transform-origin:0 0;transform:rotate(-90deg) translate(-100%,0);font-size:10px;line-height:7px;color:#444">40</div></div>
<div class="a" style="left:85.5px;top:803.3px;width:0;height:0"><div style="position:absolute;left:0;top:0;transform-origin:0 0;transform:rotate(-90deg) translate(-100%,0);font-size:10px;line-height:7px;color:#444">50</div></div>
<div class="a" style="left:85.5px;top:870.0px;width:0;height:0"><div style="position:absolute;left:0;top:0;transform-origin:0 0;transform:rotate(-90deg) translate(-100%,0);font-size:10px;line-height:7px;color:#444">60</div></div>
<div class="a" style="left:85.5px;top:936.7px;width:0;height:0"><div style="position:absolute;left:0;top:0;transform-origin:0 0;transform:rotate(-90deg) translate(-100%,0);font-size:10px;line-height:7px;color:#444">70</div></div>
<div class="a" style="left:176px;top:358px;width:968px;height:553.5px;background:#b2d691;box-shadow:0 3px 8px rgba(0,0,0,.11),0 .5px 1px rgba(0,0,0,.1);overflow:hidden">
<svg style="left:0;top:0" width="968" height="554" viewBox="176 358 968 554">
<path d="M796.8 354 C797.2 366 795 375 786 378.2 C778 380.5 771 376.8 764 377 C757.5 377.5 754.8 384 755.2 392.5 C755.6 400 757.6 404 757.2 409.5 C756.6 416 751 419 744 418.6 C736 418 729 416 723 416.8 C720 417.3 718 418.8 717.2 420.4" fill="none" stroke="#ffffff" stroke-width="7.8" stroke-linecap="round"/>
<polygon points="880.1,416.7 996.6,395.3 956.8,326.4" fill="#26b574"/>
<polygon points="1079.3,401.8 1132.3,376.7 1104.6,348" fill="#ffffff"/>
<circle cx="817.7" cy="442.4" r="11.8" fill="#26b574"/>
<circle cx="1105.8" cy="469.5" r="11.8" fill="#26b574"/>
<circle cx="951.8" cy="507.9" r="41.8" fill="none" stroke="#ffffff" stroke-width="8.6"/>
<path d="M780.3 521.5 C784 525 785 530 785 538 C785 546 785 552 790 555.5 C795 559 802 558 809 555.5 C816 553 822 553 826 557 C830 561 829.5 570 829.7 577 C830 584 831 590 837 591.5 C843 593 850 590.5 857 588.5 C864 586.5 870 588 872.5 594 C875 600 873.5 609 874 614 C874.5 619 876 622.5 877.7 624.1" fill="none" stroke="#26b574" stroke-width="8.3" stroke-linecap="round"/>
<path d="M1074.3 520.2 C1080 524 1081.5 530 1082.3 538 C1083 546 1085 551 1092 553.5 C1098 555.5 1103 551.5 1109 548 C1115 544.5 1121 543 1126 546 C1131 549 1132.5 556 1133.3 563 C1134 570 1136 576 1141 579 C1145 581.5 1149 582 1152 582" fill="none" stroke="#26b574" stroke-width="8" stroke-linecap="round"/>
<polygon points="984,610 1009.5,640 954.5,661.3" fill="#26b574"/>
<circle cx="1090.8" cy="638.8" r="11.8" fill="#ffffff"/>
<circle cx="879.5" cy="707.8" r="11.8" fill="#ffffff"/>
<polygon points="776.3,758.3 835,751.8 793.8,793.8" fill="#26b574"/>
<circle cx="986.8" cy="773.3" r="41.9" fill="none" stroke="#ffffff" stroke-width="8.2"/>
<polygon points="1081,706 1196,685 1120,775" fill="#26b574"/>
<circle cx="1109.5" cy="834.5" r="11.8" fill="#26b574"/>
<circle cx="925.5" cy="873" r="11.8" fill="#26b574"/>
<polygon points="1059,872 1086,899 1032,928" fill="#ffffff"/>
<path d="M852.4 846.5 C849.5 849.5 845 850.5 839 850 C833 849.5 827 847 822 847.8 C816 849 813 854 813.3 861 C813.6 867 815.6 872 815 878 C814 886 809 890 801 889.6 C795 889 789 887 783 887.5 C776 888.5 773.2 893 773.3 900 C773.4 906 774.5 910 775 916" fill="none" stroke="#ffffff" stroke-width="8.2" stroke-linecap="round"/>
</svg></div>
<div class="a" style="left:255.0px;top:515.1px;font-size:89.7px;line-height:89.7px;font-weight:bold;color:#063d1e;letter-spacing:7.6px">LAURA</div>
<div class="a" style="left:255.0px;top:603.5px;font-size:89.7px;line-height:89.7px;font-weight:bold;color:#063d1e;letter-spacing:8.3px">BRENNAN</div>
<div class="a" style="left:257.7px;top:710.1px;font-size:35.3px;line-height:35.3px;color:#063d1e;letter-spacing:2.4px;-webkit-text-stroke:.7px #063d1e">PATTERN ART</div>
<div class="a" style="left:260.0px;top:784.9px;font-size:21px;line-height:21px;font-weight:bold;color:#fbfdf8;letter-spacing:1.8px">202 234 4273</div>
<div class="a" style="left:260.0px;top:809.9px;font-size:21px;line-height:21px;font-weight:bold;color:#fbfdf8;letter-spacing:0.65px">brennanpattern@gmail.com</div>
<div class="a" style="left:260.0px;top:836.1px;font-size:21px;line-height:21px;font-weight:bold;color:#fbfdf8;letter-spacing:0.8px">www.brennanpattern.com</div>
<svg style="left:1268px;top:234px" width="15" height="17" viewBox="0 0 15 17"><path d="M.8 .8 H9 L14.2 6 V16.2 H.8 Z" fill="#cde6fc" stroke="#4c9ef3" stroke-width="1.2" stroke-linejoin="round"/><path d="M9 .8 V6 H14.2" fill="none" stroke="#4c9ef3" stroke-width="1.2"/></svg>
<svg style="left:1316px;top:234px" width="22" height="18" viewBox="0 0 22 18"><path d="M.8 .8 H21 V6.5 H6.5 V17 H.8 Z" fill="none" stroke="#8a8a8a" stroke-width="1.3"/><path d="M9 1 V3.5 M12 1 V3.5 M15 1 V3.5 M18 1 V3.5 M1 9 H3.5 M1 12 H3.5" stroke="#8a8a8a" stroke-width="1.1"/></svg>
<svg style="left:1369px;top:233px" width="19" height="19" viewBox="0 0 19 19"><path d="M7 9 V4.5 Q7 1 9.5 1 Q12 1 12 4.5 V9 H17 L18 17.5 H1 L2 9 Z M1.5 13 H17.5 M6 17.5 V14.5 M9.5 17.5 V14.5 M13 17.5 V14.5" fill="none" stroke="#8a8a8a" stroke-width="1.3" stroke-linejoin="round"/></svg>
<svg style="left:1420px;top:234px" width="20" height="18" viewBox="0 0 20 18"><path d="M1 4.5 V1 H19 V4.5 M3 1 Q2 3 1 4.5 M17 1 Q18 3 19 4.5 M8 1 V16.8 H6 M12 1 V16.8 H14 M6 16.8 H14" fill="none" stroke="#8a8a8a" stroke-width="1.3"/></svg>
<div class="a" style="left:1242.5px;top:278.2px;font-size:13px;line-height:13px;font-weight:bold;color:#2b2b2b;letter-spacing:.2px">Document Size</div>
<svg style="left:1242px;top:304px" width="19" height="16" viewBox="0 0 19 16"><path d="M1 0 V15.5 M17.5 0 V15.5 M1.5 7.8 H17" fill="none" stroke="#505050" stroke-width="1.3"/><path d="M4.5 5.5 L1.8 7.8 L4.5 10 M14 5.5 L16.7 7.8 L14 10" fill="none" stroke="#505050" stroke-width="1.2"/></svg>
<div class="a" style="left:1264.2px;top:302.7px;width:72.09999999999991px;height:20.30000000000001px;background:#fff;box-shadow:0 0 0 .6px #c8c8c8, 0 .5px 1px rgba(0,0,0,.1)"></div>
<div class="a" style="left:1280.5px;top:306.8px;font-size:13px;line-height:13px;color:#222;letter-spacing:.55px;-webkit-text-stroke:.2px #222">3.500 in</div>
<div class="a" style="left:1340.6px;top:304px;width:10.5px;height:19px;border-radius:5px;background:#fff;box-shadow:0 0 0 .6px #cfcfcf"></div>
<svg style="left:1340.6px;top:304px" width="11" height="19" viewBox="0 0 11 19"><path d="M2.6 7 L5.3 4.2 L8 7 M2.6 12 L5.3 14.8 L8 12" fill="none" stroke="#444" stroke-width="1.2"/></svg>
<svg style="left:1359.5px;top:304px" width="17" height="16" viewBox="0 0 17 16"><path d="M.5 1 H15.5 M.5 15 H15.5 M8 1.5 V14.5" fill="none" stroke="#505050" stroke-width="1.1"/><path d="M5.8 4.3 L8 1.8 L10.2 4.3 M5.8 11.7 L8 14.2 L10.2 11.7" fill="none" stroke="#505050" stroke-width="1.2"/></svg>
<div class="a" style="left:1379.3px;top:302.7px;width:72.20000000000005px;height:20.30000000000001px;background:#fff;box-shadow:0 0 0 .6px #c8c8c8, 0 .5px 1px rgba(0,0,0,.1)"></div>
<div class="a" style="left:1395.0px;top:306.8px;font-size:13px;line-height:13px;color:#222;letter-spacing:.55px;-webkit-text-stroke:.2px #222">2.000 in</div>
<div class="a" style="left:1455.3px;top:304px;width:10.5px;height:19px;border-radius:5px;background:#fff;box-shadow:0 0 0 .6px #cfcfcf"></div>
<svg style="left:1455.3px;top:304px" width="11" height="19" viewBox="0 0 11 19"><path d="M2.6 7 L5.3 4.2 L8 7 M2.6 12 L5.3 14.8 L8 12" fill="none" stroke="#444" stroke-width="1.2"/></svg>
<div class="a" style="left:1243.3px;top:343.2px;width:222.7px;height:19px;border-radius:4px;background:#fff;box-shadow:0 0 0 .6px #c9c9c9,0 1px 1px rgba(0,0,0,.08);overflow:hidden"><div style="position:absolute;right:0;top:0;width:16.2px;height:19px;background:linear-gradient(#4aa0fb,#1877f0)"></div></div>
<svg style="left:1450px;top:343px" width="16" height="19" viewBox="0 0 16 19"><path d="M5.2 7.2 L8 4.5 L10.8 7.2 M5.2 11.8 L8 14.5 L10.8 11.8" fill="none" stroke="#fff" stroke-width="1.4"/></svg>
<div class="a" style="left:1249.8px;top:346.2px;font-size:13px;line-height:13px;color:#222;letter-spacing:.65px;-webkit-text-stroke:.2px #222">Inches (in)</div>
<div class="a" style="left:1242.5px;top:376.2px;font-size:13px;line-height:13px;font-weight:bold;color:#2b2b2b;letter-spacing:.2px">Orientation</div>
<svg style="left:1288px;top:397px" width="130" height="60" viewBox="1288 397 130 60"><path d="M1289 415.4 H1332.6 L1346.6 429.4 V456.5 H1289 Z" fill="rgba(0,0,0,.13)"/><path d="M1289 414.6 H1332.6 L1346.6 428.6 V455.6 H1289 Z" fill="#fff"/><path d="M1332.6 414.6 V428.6 H1346.6 Z" fill="#d3d3d3"/><path d="M1296.2 444.8 L1300.2 449.6 L1307.5 441" fill="none" stroke="#3a82d6" stroke-width="1.6"/><path d="M1372.7 399.3 H1400.2 L1414.2 413.3 V456.5 H1372.7 Z" fill="rgba(0,0,0,.13)"/><path d="M1372.7 398.5 H1400.2 L1414.2 412.5 V455.6 H1372.7 Z" fill="#fff"/><path d="M1400.2 398.5 V412.5 H1414.2 Z" fill="#d3d3d3"/></svg>
<div class="a" style="left:1242.5px;top:469.8px;font-size:13px;line-height:13px;font-weight:bold;color:#2b2b2b">Layout</div>
<div class="a" style="left:1286px;top:493.8px;width:137.7px;height:194px;background:#fff;border:1.5px solid #1f1f1f"></div>
<svg style="left:1286px;top:494px" width="138" height="194" viewBox="1286 494 138 194"><rect x="1295.4" y="507" width="119.5" height="168.1" rx="1" fill="none" stroke="#606060" stroke-width="1"/><path d="M1354.8 507 V675 M1295.4 540.8 H1414.9 M1295.4 574.3 H1414.9 M1295.4 607.4 H1414.9 M1295.4 641.1 H1414.9" stroke="#555" stroke-width="1.1"/></svg>
<div class="a" style="left:1242.5px;top:735.4px;font-size:13px;line-height:13px;color:#262626;letter-spacing:.2px;-webkit-text-stroke:.35px #262626">Your Own - 10 Cards (3-1/2*2 in)</div>
<div class="a" style="left:1228px;top:789px;width:253px;height:1px;background:#d6d6d6"></div>
<svg style="left:1316px;top:796px" width="22" height="20" viewBox="0 0 22 20"><path d="M11 10.5 L20.5 14.5 L11 18.5 L1.5 14.5 Z" fill="#bcdcfb" stroke="#5aa6f4" stroke-width="1"/><path d="M11 6.5 L20.5 10.5 L11 14.5 L1.5 10.5 Z" fill="#bcdcfb" stroke="#5aa6f4" stroke-width="1"/><path d="M11 2 L20.5 6 L11 10 L1.5 6 Z" fill="#bcdcfb" stroke="#5aa6f4" stroke-width="1"/></svg>
<svg style="left:1368px;top:797px" width="21" height="18" viewBox="1368 797 21 18"><path d="M1371 797.5 V814.2 M1378.2 797.5 V814.2 M1385.4 797.5 V814.2 M1368.6 799.8 H1387.7 M1368.6 805.6 H1387.7 M1368.6 811.3 H1387.7" stroke="#8d8d8d" stroke-width="1.4"/></svg>
<div class="a" style="left:1228.5px;top:825.2px;width:252.5px;height:26.5px;background:#0666d8"></div>
<div class="a" style="left:1232.3px;top:832.2px;font-size:13px;line-height:13px;color:#fff;letter-spacing:.3px;-webkit-text-stroke:.2px #fff">Foreground</div>
<svg style="left:1406px;top:831px" width="17" height="15" viewBox="1406 831 17 15"><g transform="rotate(-43.3 1414.8 838.7)"><rect x="1407.6" y="836.9" width="14.4" height="3.6" rx="1.8" fill="none" stroke="#fff" stroke-width="1.25"/><path d="M1419 837 V840.4" stroke="#fff" stroke-width="1.1"/></g></svg>
<svg style="left:1433.8px;top:833.2px" width="15" height="11" viewBox="0 0 15 11"><path d="M.9 5.5 Q7.3 -1.8 13.9 5.5 Q7.3 12.8 .9 5.5 Z" fill="none" stroke="#fff" stroke-width="1.25"/><circle cx="7.4" cy="5.5" r="2.1" fill="none" stroke="#fff" stroke-width="1.25"/></svg>
<svg style="left:1459.8px;top:831px" width="16" height="14" viewBox="0 0 16 14"><path d="M3.6 3.6 V.8 H11.8 V3.6 M3.6 9.8 H2.1 Q.8 9.8 .8 8.5 V4.9 Q.8 3.6 2.1 3.6 H13.3 Q14.6 3.6 14.6 4.9 V8.5 Q14.6 9.8 13.3 9.8 H11.8 M3.6 7.6 H11.8 V13 H3.6 Z" fill="none" stroke="#fff" stroke-width="1.25" stroke-linejoin="round"/><circle cx="12.2" cy="5.6" r=".65" fill="#fff"/></svg>
<div class="a" style="left:1232.3px;top:859.6px;font-size:13px;line-height:13px;color:#1e1e1e;letter-spacing:.3px;-webkit-text-stroke:.2px #1e1e1e">Background</div>
<svg style="left:1433.8px;top:860px" width="15" height="11" viewBox="0 0 15 11"><path d="M.9 5.5 Q7.3 -1.8 13.9 5.5 Q7.3 12.8 .9 5.5 Z" fill="none" stroke="#8a8a8a" stroke-width="1.25"/><circle cx="7.4" cy="5.5" r="2.1" fill="none" stroke="#8a8a8a" stroke-width="1.25"/></svg>
<svg style="left:1459.8px;top:858.5px" width="16" height="14" viewBox="0 0 16 14"><path d="M3.6 3.6 V.8 H11.8 V3.6 M3.6 9.8 H2.1 Q.8 9.8 .8 8.5 V4.9 Q.8 3.6 2.1 3.6 H13.3 Q14.6 3.6 14.6 4.9 V8.5 Q14.6 9.8 13.3 9.8 H11.8 M3.6 7.6 H11.8 V13 H3.6 Z" fill="none" stroke="#8a8a8a" stroke-width="1.25" stroke-linejoin="round"/><circle cx="12.2" cy="5.6" r=".65" fill="#8a8a8a"/></svg>
<svg style="left:1236px;top:954px" width="45" height="14" viewBox="0 0 45 14"><path d="M7 1 V13 M1 7 H13 M29 7 H42" stroke="#6f6f6f" stroke-width="1.2"/></svg>
</body></html>
